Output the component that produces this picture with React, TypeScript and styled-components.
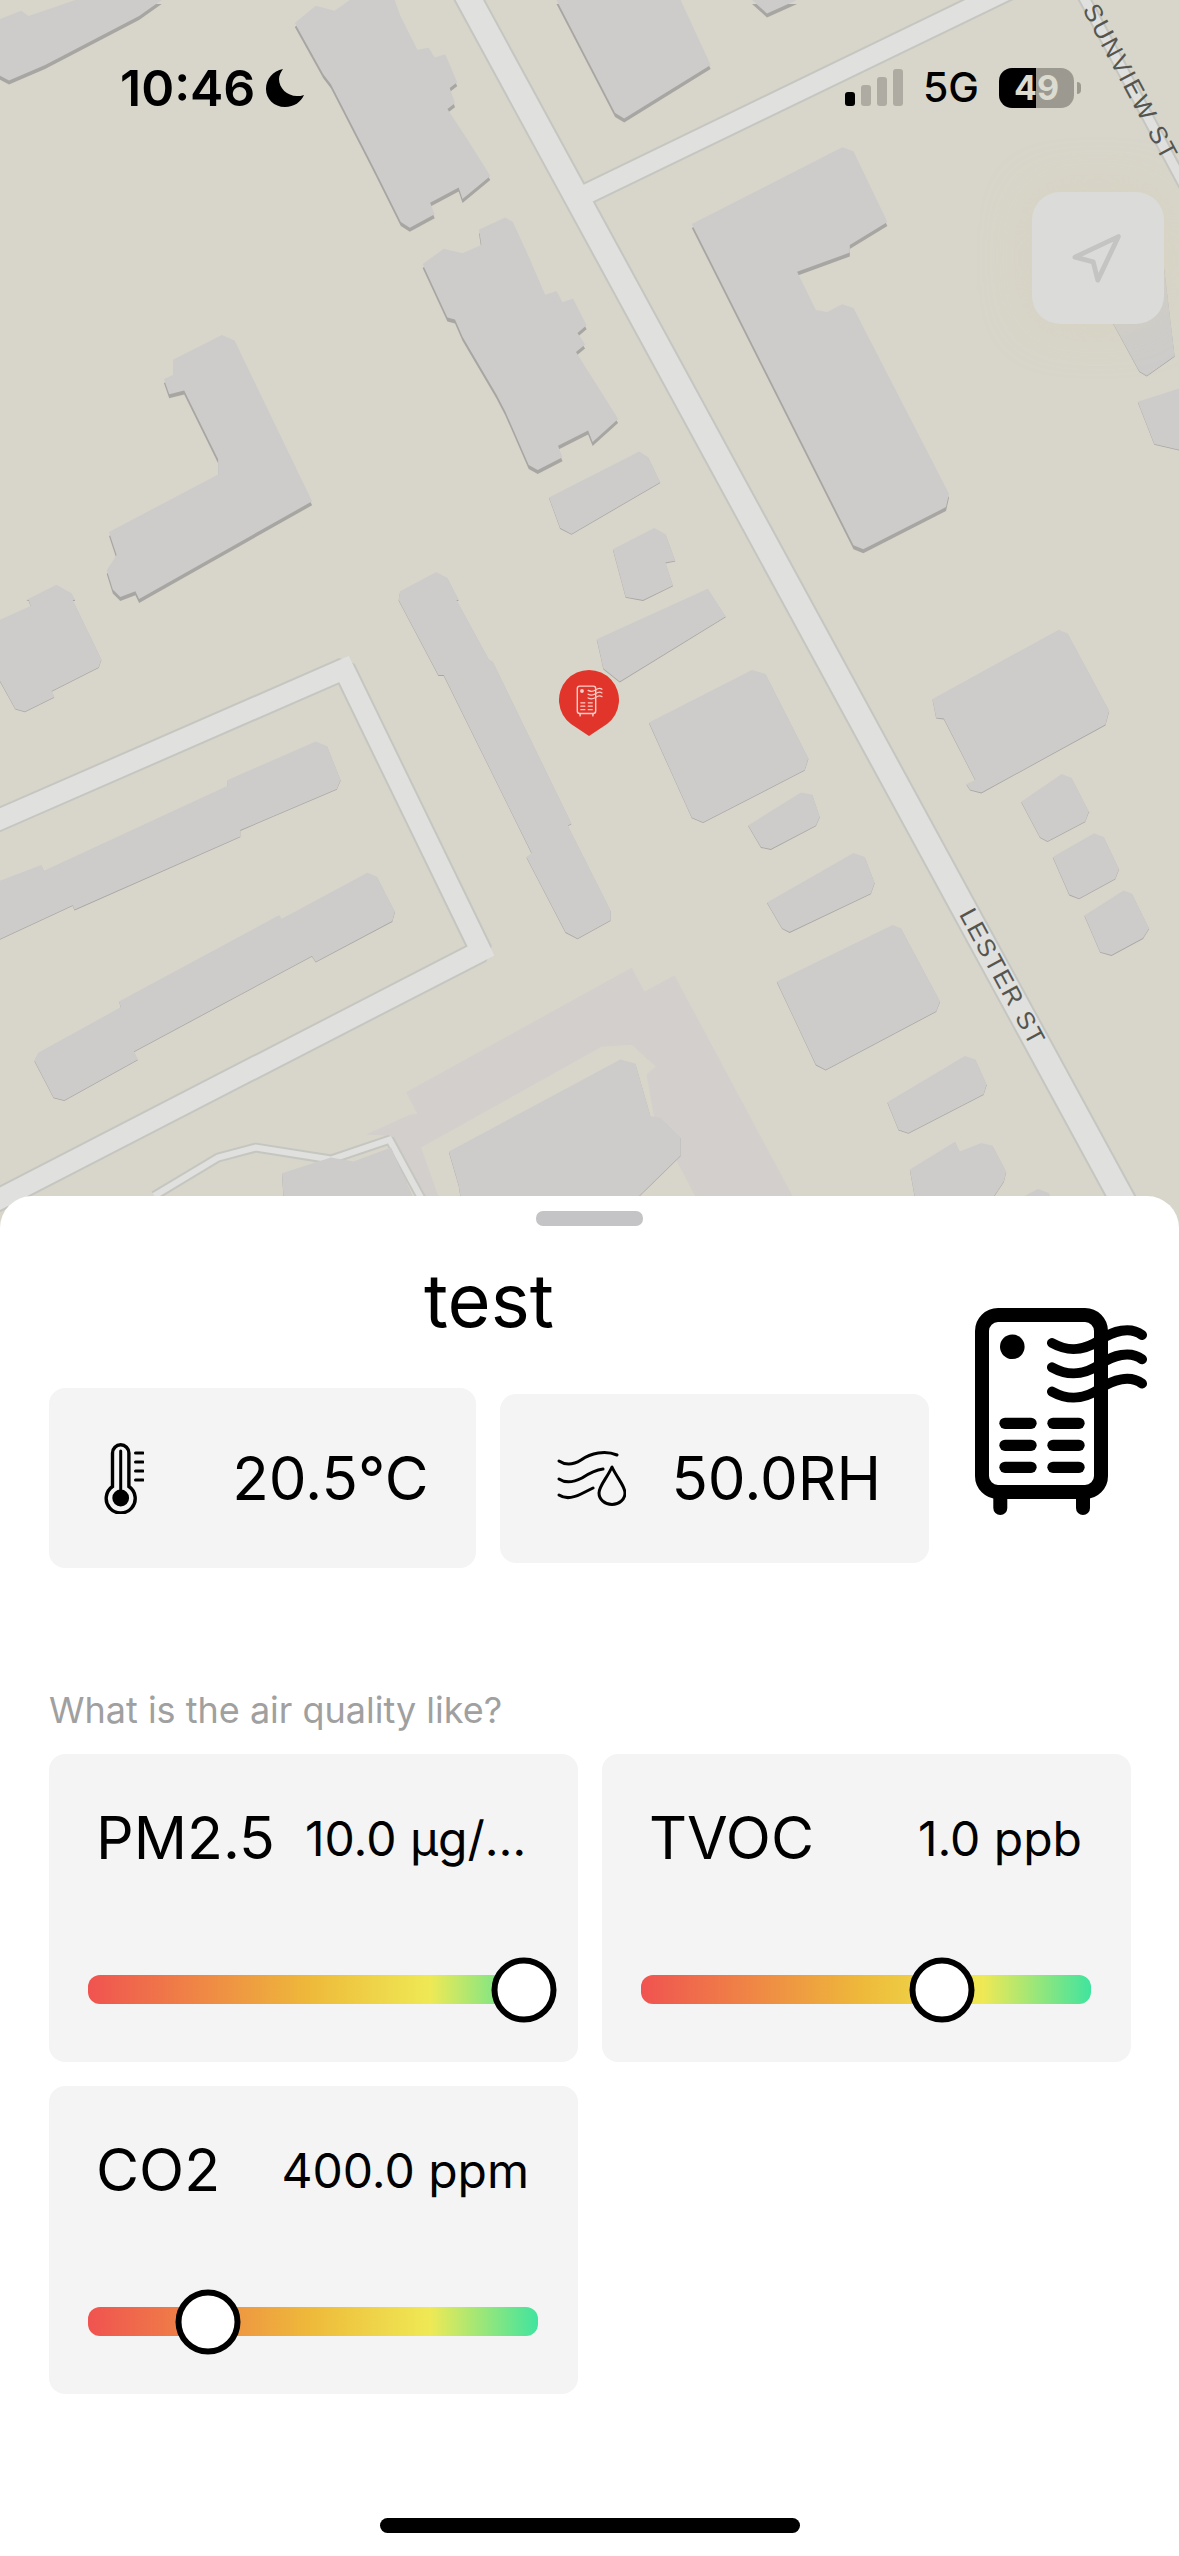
import React from "react";
import styled, { createGlobalStyle } from "styled-components";
import { Navigation } from "lucide-react";

const GlobalStyle = createGlobalStyle`
  html, body { margin: 0; padding: 0; background: #fff; }
  body { font-family: Inter, "Liberation Sans", sans-serif; color: #000; }
  * { box-sizing: border-box; }
`;

type Pt = [number, number];
const z1 = (p: Pt[]): Pt[] => p.map(([x, y]) => [x * 0.752, y * 0.3827]);
const z2 = (p: Pt[]): Pt[] => p.map(([x, y]) => [x * 0.752, 600 + y * 0.3954]);
const z9 = (p: Pt[]): Pt[] => p.map(([x, y]) => [x * 0.3827, 600 + y * 0.3954]);
const pv = (p: Pt[]): Pt[] => p.map(([x, y]) => [x * 1.6307, y * 1.6307]);
const str = (p: Pt[]) => p.map(([x, y]) => `${x.toFixed(1)},${y.toFixed(1)}`).join(" ");

const tallBuildings: Pt[][] = [
  z1([[0,50],[28,28],[38,42],[100,0],[215,0],[185,42],[60,170],[12,210],[0,198]]),
  z1([[392,60],[420,15],[445,28],[465,0],[525,0],[532,40],[555,130],[570,125],[578,150],[592,142],[608,215],[598,230],[605,270],[595,285],[625,375],[652,460],[615,520],[610,490],[572,530],[578,560],[545,595],[533,580],[500,450],[487,400],[440,220],[430,195]]),
  z1([[740,0],[905,0],[945,170],[830,310],[818,295]]),
  z1([[1000,0],[1060,0],[1020,35]]),
  z1([[562,690],[590,650],[615,662],[640,640],[637,600],[672,568],[682,580],[703,670],[725,770],[740,760],[748,790],[762,780],[780,850],[768,870],[778,900],[766,920],[795,1010],[822,1095],[788,1155],[782,1125],[742,1165],[748,1195],[715,1228],[703,1215],[672,1075],[660,1030],[615,880],[605,835],[595,830]]),
  z1([[230,940],[295,875],[312,890],[415,1310],[185,1565],[180,1545],[160,1560],[150,1540],[142,1490],[155,1450],[145,1390],[290,1240],[290,1200],[245,1020],[225,1030],[218,990],[230,980]]),
  z1([[920,585],[1120,385],[1135,395],[1180,580],[1130,640],[1130,660],[1060,710],[1085,810],[1100,815],[1120,795],[1135,805],[1262,1290],[1258,1325],[1148,1435],[1135,1425]]),
];

const flatBuildings: Pt[][] = [
  z1([[730,1300],[850,1180],[862,1195],[878,1260],[760,1395],[745,1380]]),
  z1([[815,1435],[870,1380],[885,1395],[898,1465],[885,1470],[895,1530],[855,1568],[832,1560]]),
  z1([[1440,700],[1548,700],[1562,930],[1525,982],[1515,970]]),
  z1([[1513,1050],[1568,1015],[1568,1175],[1535,1160]]),
  z1([[532,1545],[580,1495],[595,1510],[610,1568],[530,1568]]),
  z2([[530,0],[607,0],[650,150],[655,155],[760,565],[755,570],[812,785],[812,810],[768,856],[752,840],[700,650],[707,640],[590,190],[583,190]]),
  z1([[35,1568],[75,1528],[95,1550],[100,1568]]),
  z9([[0,50],[80,15],[75,0],[190,0],[265,150],[258,170],[135,230],[142,245],[65,282],[40,275],[0,205]]),
  z9([[0,710],[108,670],[115,685],[595,470],[595,455],[825,358],[855,370],[890,455],[880,478],[628,582],[628,598],[195,783],[190,772],[0,857]]),
  z9([[90,1165],[100,1145],[315,1030],[312,1015],[730,797],[735,807],[960,690],[985,700],[1032,788],[1025,812],[825,915],[815,900],[350,1142],[360,1162],[168,1265],[140,1258]]),
  pv([[366,392],[434,361],[445,378],[380,418],[370,410]]),
  z2([[863,310],[1000,177],[1018,187],[1075,400],[1070,430],[935,562],[920,550]]),
  z2([[995,570],[1065,487],[1080,492],[1090,548],[1085,570],[1025,630],[1012,625]]),
  z2([[1020,765],[1135,640],[1150,650],[1163,715],[1158,742],[1050,840],[1040,830]]),
  z2([[1033,965],[1187,822],[1198,830],[1250,1015],[1245,1040],[1098,1188],[1085,1175]]),
  z2([[1180,1270],[1283,1153],[1297,1162],[1312,1225],[1308,1250],[1208,1348],[1195,1340]]),
  z2([[1210,1440],[1270,1370],[1276,1395],[1305,1373],[1320,1380],[1338,1445],[1335,1470],[1290,1600],[1225,1600]]),
  z2([[1240,250],[1408,75],[1420,85],[1475,280],[1470,315],[1305,487],[1290,480],[1285,465],[1297,455],[1255,300],[1245,298]]),
  z2([[1358,510],[1412,440],[1425,450],[1448,535],[1443,560],[1393,610],[1383,600]]),
  z2([[1400,650],[1455,590],[1468,600],[1488,680],[1483,705],[1435,755],[1422,745]]),
  z2([[1442,798],[1494,735],[1505,742],[1528,830],[1520,855],[1478,898],[1463,890]]),
  z2([[1350,1520],[1380,1490],[1395,1500],[1400,1600],[1350,1600]]),
  z2([[375,1450],[440,1410],[470,1420],[520,1385],[570,1600],[380,1600]]),
  z2([[597,1395],[825,1162],[845,1172],[865,1305],[878,1310],[905,1360],[905,1405],[800,1600],[620,1600],[610,1480]]),
];

const parkingLot = z2([[840,930],[857,990],[897,950],[1080,1600],[950,1600],[870,1310],[860,1200],[872,1180],[840,1125],[800,1130],[560,1385],[600,1600],[570,1600],[520,1355],[487,1352],[545,1302],[555,1300],[540,1245]]);

const roads: { pts: Pt[]; width: number }[] = [
  { pts: [[453, -30], [1140, 1232]], width: 28 },
  { pts: [[574, 200], [1047, -29]], width: 23 },
  { pts: [[1069, -30], [1190, 196]], width: 13 },
  { pts: [[-20, 828], [344, 669], [481, 951], [-20, 1209]], width: 24 },
  { pts: z2([[205, 1507], [290, 1410], [340, 1385], [440, 1415], [518, 1365], [585, 1600]]), width: 10 },
];

const Page = styled.div`
  width: 1179px;
  height: 2556px;
  display: flex;
  flex-direction: column;
  overflow: hidden;
  background: #fff;
`;

const MapArea = styled.div`
  position: relative;
  flex: none;
  height: 1228px;
  background: #d8d6ca;
  overflow: hidden;
`;

const MapCanvas = styled.svg`
  display: block;
`;

const RoadCasing = styled.polyline`
  fill: none;
  stroke: #c6c6c1;
  stroke-linejoin: bevel;
`;

const RoadFill = styled.polyline`
  fill: none;
  stroke: #e0e0df;
  stroke-linejoin: miter;
`;

const BuildingShadow = styled.polygon`
  fill: #a8a6a2;
`;

const BuildingTop = styled.polygon`
  fill: #cdccca;
`;

const Lot = styled.polygon`
  fill: #d2cfcc;
`;

const StreetName = styled.text`
  font-family: "Liberation Sans", sans-serif;
  font-size: 25px;
  letter-spacing: 1.8px;
  fill: #55554f;
  text-anchor: middle;
  dominant-baseline: central;
`;

const StatusBar = styled.div`
  position: absolute;
  top: 0;
  left: 0;
  right: 0;
  height: 175px;
  display: flex;
  align-items: center;
  justify-content: space-between;
  padding: 0 105px 0 120px;
`;

const TimeGroup = styled.div`
  display: flex;
  align-items: center;
  gap: 10px;
`;

const Time = styled.span`
  font-size: 50px;
  font-weight: 600;
  line-height: 1;
`;

const StatusGroup = styled.div`
  display: flex;
  align-items: center;
  gap: 20px;
`;

const Signal = styled.div`
  display: flex;
  align-items: flex-end;
  gap: 6px;
  height: 37px;
`;

const SignalBar = styled.div<{ $h: number; $on?: boolean }>`
  width: 10px;
  height: ${(p) => p.$h}px;
  border-radius: 3px;
  background: ${(p) => (p.$on ? "#000" : "#aeaca2")};
`;

const Network = styled.span`
  font-size: 41px;
  font-weight: 500;
  line-height: 1;
`;

const Battery = styled.div`
  position: relative;
  width: 75px;
  height: 40px;
  border-radius: 13px;
  background: linear-gradient(90deg, #000 0 49%, #9c9a90 49% 100%);
  display: flex;
  align-items: center;
  justify-content: center;
  font-size: 34px;
  font-weight: 700;
  color: #dcdbd0;
  line-height: 1;
  &::after {
    content: "";
    position: absolute;
    left: 78px;
    top: 14px;
    width: 4px;
    height: 12px;
    border-radius: 0 6px 6px 0;
    background: #9c9a90;
  }
`;

const LocateButton = styled.div`
  position: absolute;
  top: 192px;
  right: 15px;
  width: 132px;
  height: 132px;
  padding: 3px 6px 0 0;
  border-radius: 28px;
  background: #dbdbd9;
  box-shadow: 0 0 50px rgba(214, 208, 190, 0.7);
  display: flex;
  align-items: center;
  justify-content: center;
  color: #c4c4c2;
`;

const Pin = styled.div`
  position: absolute;
  left: 559px;
  top: 670px;
  width: 60px;
  height: 66px;
`;

const PinShape = styled.svg`
  position: absolute;
  inset: 0;
`;

const PinGlyph = styled.svg`
  position: absolute;
  left: 17px;
  top: 15px;
`;

const Sheet = styled.div`
  position: relative;
  flex: 1;
  margin-top: -32px;
  border-radius: 32px 32px 0 0;
  background: #fff;
  padding: 15px 49px 0;
  display: flex;
  flex-direction: column;
`;

const Grabber = styled.div`
  flex: none;
  align-self: center;
  width: 107px;
  height: 15px;
  border-radius: 7px;
  background: #c4c4c6;
`;

const Header = styled.div`
  display: flex;
  align-items: flex-start;
  gap: 46px;
  margin-top: 38px;
`;

const HeaderMain = styled.div`
  width: 880px;
  flex: none;
`;

const Title = styled.div`
  font-size: 74px;
  line-height: 72px;
  text-align: center;
`;

const ReadingRow = styled.div`
  display: flex;
  align-items: center;
  gap: 24px;
  margin-top: 52px;
`;

const ReadingCard = styled.div<{ $h: number; $left: number; $right: number }>`
  flex: 1;
  height: ${(p) => p.$h}px;
  border-radius: 16px;
  background: #f4f4f4;
  display: flex;
  align-items: center;
  justify-content: space-between;
  padding: 0 ${(p) => p.$right}px 0 ${(p) => p.$left}px;
`;

const ReadingValue = styled.span`
  font-size: 60px;
  line-height: 1;
`;

const DeviceIcon = styled.svg`
  flex: none;
  margin-top: 44px;
`;

const SectionLabel = styled.div`
  margin-top: 120px;
  font-size: 36px;
  line-height: 44px;
  color: #a0a0a0;
`;

const MetricGrid = styled.div`
  display: grid;
  grid-template-columns: 529px 529px;
  gap: 24px;
  margin-top: 22px;
`;

const MetricCard = styled.div`
  height: 308px;
  border-radius: 16px;
  background: #f4f4f4;
  padding: 48px 40px 0 39px;
`;

const MetricHead = styled.div`
  display: flex;
  align-items: center;
  justify-content: space-between;
  gap: 30px;
  padding: 0 9px 0 8px;
  height: 72px;
`;

const MetricName = styled.span`
  flex: none;
  font-size: 59px;
  line-height: 72px;
`;

const MetricValue = styled.span`
  min-width: 0;
  font-size: 48px;
  white-space: nowrap;
  overflow: hidden;
  text-overflow: ellipsis;
`;

const Track = styled.div`
  position: relative;
  height: 29px;
  margin-top: 101px;
  border-radius: 12px;
  background: linear-gradient(90deg, #f05350 0%, #eebb3a 50%, #efe955 76%, #40e49f 100%);
`;

const Thumb = styled.div`
  position: absolute;
  top: 50%;
  width: 65px;
  height: 65px;
  border-radius: 50%;
  border: 6px solid #000;
  background: #fff;
  transform: translate(-50%, -50%);
`;

const HomeIndicator = styled.div`
  position: absolute;
  left: 380px;
  bottom: 23px;
  width: 420px;
  height: 15px;
  border-radius: 8px;
  background: #000;
`;

const DeviceGlyph: React.FC<{ color: string; thin?: boolean }> = ({ color, thin }) => {
  const body = thin ? 9 : 14;
  const wave = thin ? 8 : 10;
  const slot = thin ? 8 : 11.3;
  return (
    <g fill="none" stroke={color} strokeLinecap="round">
      <rect x={52} y={35} width={119} height={177} rx={16} strokeWidth={body} />
      <line x1={70.3} y1={218} x2={70.3} y2={228} strokeWidth={body} />
      <line x1={153} y1={218} x2={153} y2={228} strokeWidth={body} />
      <circle cx={82.3} cy={66.7} r={12.3} fill={color} stroke="none" />
      {[143.3, 165.3, 187.3].map((y) => (
        <g key={y} strokeWidth={slot}>
          <line x1={75} y1={y} x2={101} y2={y} />
          <line x1={123} y1={y} x2={149} y2={y} />
        </g>
      ))}
      {[0, 24.3, 48.6].map((d) => (
        <path
          key={d}
          d={`M122 ${63 + d} C140 ${73 + d} 155 ${70 + d} 170 ${60 + d} C183 ${51 + d} 200 ${46 + d} 212 ${55 + d}`}
          strokeWidth={wave}
        />
      ))}
    </g>
  );
};

const Thermometer = () => (
  <svg width={40} height={71} viewBox="0 0 40 71">
    <path
      d="M8.5 43.5 V10 a8.2 8.2 0 0 1 16.4 0 V43.5 a14.5 14.5 0 1 1 -16.4 0 Z"
      fill="none"
      stroke="#000"
      strokeWidth={3.4}
    />
    <line x1={16.7} y1={8} x2={16.7} y2={48} stroke="#000" strokeWidth={3} strokeLinecap="round" />
    <circle cx={16.7} cy={55} r={8.4} fill="#000" />
    {[10, 19, 28, 37].map((y) => (
      <line key={y} x1={31.5} y1={y} x2={39} y2={y} stroke="#000" strokeWidth={3} strokeLinecap="round" />
    ))}
  </svg>
);

const Humidity = () => (
  <svg width={69} height={56} viewBox="0 0 69 56" fill="none" stroke="#000" strokeWidth={3} strokeLinecap="round">
    <path d="M2 11 C8 15 16 15 24 10 C34 3 48 0 60 5" />
    <path d="M2 29 C8 33 17 32 25 28 C31 24 38 20 46 19" />
    <path d="M2 45 C8 49 16 48 24 44 C28 42 32 40 36 38" />
    <path d="M55 17 C50 28 42 36 42 43 A13 11.5 0 0 0 68 43 C68 36 60 28 55 17 Z" strokeLinejoin="round" />
  </svg>
);

const metrics = [
  { name: "PM2.5", value: "10.0 µg/m³", pos: 96.9 },
  { name: "TVOC", value: "1.0 ppb", pos: 66.9 },
  { name: "CO2", value: "400.0 ppm", pos: 26.7 },
];

export default function App() {
  return (
    <Page>
      <GlobalStyle />
      <MapArea>
        <MapCanvas width={1179} height={1228} viewBox="0 0 1179 1228">
          <Lot points={str(parkingLot)} />
          {roads.map((r, i) => (
            <RoadCasing key={i} points={str(r.pts)} strokeWidth={r.width} />
          ))}
          {roads.map((r, i) => (
            <RoadFill key={i} points={str(r.pts)} strokeWidth={r.width - 4} />
          ))}
          {tallBuildings.map((b, i) => (
            <BuildingShadow key={i} points={str(b)} transform="translate(0 4)" />
          ))}
          {flatBuildings.map((b, i) => (
            <BuildingShadow key={i} points={str(b)} transform="translate(0 0.8)" />
          ))}
          {tallBuildings.map((b, i) => (
            <BuildingTop key={i} points={str(b)} />
          ))}
          {flatBuildings.map((b, i) => (
            <BuildingTop key={i} points={str(b)} />
          ))}
          <StreetName x={1003} y={977} transform="rotate(61.6 1003 977)">LESTER ST</StreetName>
          <StreetName x={1131} y={82} transform="rotate(62 1131 82)">SUNVIEW ST</StreetName>
        </MapCanvas>
        <StatusBar>
          <TimeGroup>
            <Time>10:46</Time>
            <svg width={40} height={40} viewBox="0 0 40 40">
              <path d="M18 1 C8 3 1 11 1 21 C1 31 9 39 20 39 C29 39 36 34 39 27 C37 28 34 28 32 28 C22 28 14 20 14 11 C14 7 16 4 18 1 Z" fill="#000" />
            </svg>
          </TimeGroup>
          <StatusGroup>
            <Signal>
              <SignalBar $h={14} $on />
              <SignalBar $h={21} />
              <SignalBar $h={29} />
              <SignalBar $h={37} />
            </Signal>
            <Network>5G</Network>
            <Battery>49</Battery>
          </StatusGroup>
        </StatusBar>
        <LocateButton>
          <Navigation size={55} strokeWidth={2.1} />
        </LocateButton>
        <Pin>
          <PinShape width={60} height={66} viewBox="0 0 60 66">
            <path d="M30 66 L12 54 A30 30 0 1 1 48 54 Z" fill="#e1352b" />
          </PinShape>
          <PinGlyph width={27} height={32} viewBox="45 28 172 207">
            <DeviceGlyph color="#f6cfca" thin />
          </PinGlyph>
        </Pin>
      </MapArea>
      <Sheet>
        <Grabber />
        <Header>
          <HeaderMain>
            <Title>test</Title>
            <ReadingRow>
              <ReadingCard $h={180} $left={55} $right={47}>
                <Thermometer />
                <ReadingValue>20.5°C</ReadingValue>
              </ReadingCard>
              <ReadingCard $h={169} $left={57} $right={48}>
                <Humidity />
                <ReadingValue>50.0RH</ReadingValue>
              </ReadingCard>
            </ReadingRow>
          </HeaderMain>
          <DeviceIcon width={172} height={207} viewBox="45 28 172 207">
            <DeviceGlyph color="#000" />
          </DeviceIcon>
        </Header>
        <SectionLabel>What is the air quality like?</SectionLabel>
        <MetricGrid>
          {metrics.map((m) => (
            <MetricCard key={m.name}>
              <MetricHead>
                <MetricName>{m.name}</MetricName>
                <MetricValue>{m.value}</MetricValue>
              </MetricHead>
              <Track>
                <Thumb style={{ left: `${m.pos}%` }} />
              </Track>
            </MetricCard>
          ))}
        </MetricGrid>
        <HomeIndicator />
      </Sheet>
    </Page>
  );
}
